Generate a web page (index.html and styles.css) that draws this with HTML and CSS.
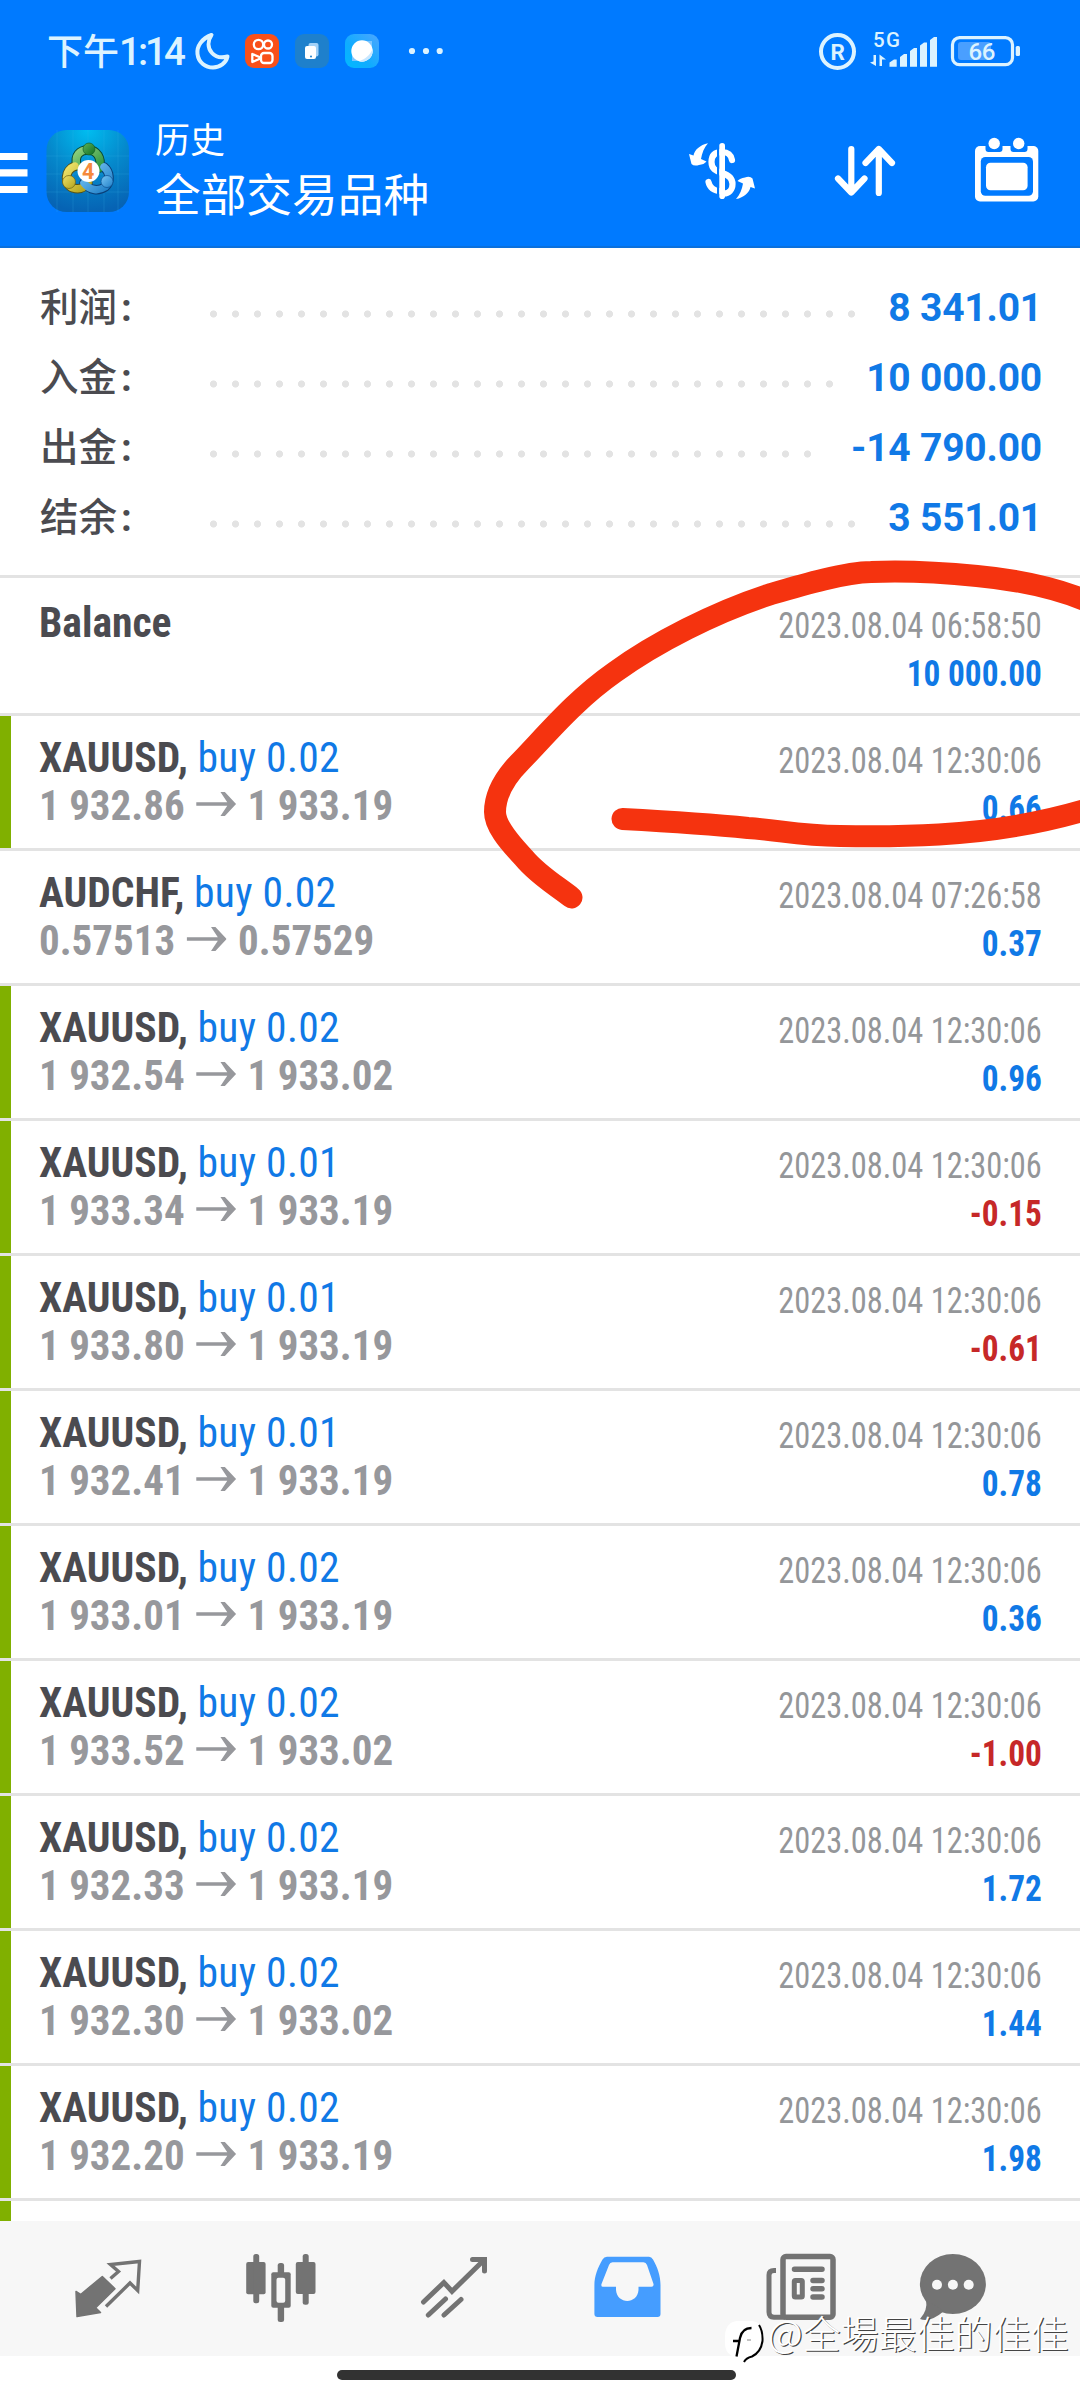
FILE: index.html
```html
<!DOCTYPE html>
<html lang="zh-CN">
<head>
<meta charset="utf-8">
<title>历史</title>
<link rel="stylesheet" href="styles.css">
</head>
<body>
<div class="screen">
  <header class="top">
    <div class="status">
      <span class="clock"><span class="ampm">下午</span>1:14</span>
      <svg class="moon" viewBox="194 32 38 38" width="38" height="38"><path d="M211.500 35C202 38.500 196.500 46 197.500 54C198.500 62.500 205.500 67.500 213 67.500C220 67.500 226 63 227.500 56.500C222 58 216 57.500 212 53C207.500 48 207.500 41 211.500 35Z" fill="none" stroke="#dcf3ff" stroke-width="4" stroke-linejoin="round"/></svg>
      <svg class="s1" viewBox="245 34 34 34" width="34" height="34"><rect x="245" y="34" width="34" height="34" rx="9" fill="#f9501a"/><g fill="none" stroke="#fff" stroke-width="2.300"><circle cx="258.500" cy="44.500" r="4.700"/><circle cx="268" cy="44.500" r="4"/><rect x="261" y="53" width="11.500" height="10" rx="3"/><path d="M252.300 54v8l7-3v-2z" stroke-linejoin="round"/></g></svg>
      <svg class="s2" viewBox="295 34 34 34" width="34" height="34"><rect x="295" y="34" width="34" height="34" rx="9" fill="#1e80cc"/><rect x="308.500" y="43" width="10" height="13.500" rx="2" fill="#a3d2f8"/><rect x="305" y="46" width="11" height="13" rx="2" fill="#fff"/><circle cx="311" cy="56.500" r="1" fill="#1e80cc"/></svg>
      <svg class="s3" viewBox="345 34 34 34" width="34" height="34"><defs><linearGradient id="g3" x1="0" y1="1" x2="1" y2="0"><stop offset="0" stop-color="#00baff"/><stop offset=".4" stop-color="#0facff"/><stop offset="1" stop-color="#4ca6ff"/></linearGradient></defs><rect x="345" y="34" width="34" height="34" rx="9" fill="url(#g3)"/><path d="M352 61V53L364 41H372V49L360 61Z" fill="#7cc6ff"/><circle cx="362" cy="51" r="10.700" fill="#fff"/><path d="M372.500 49A10.700 10.700 0 0 1 359 61.200C365.500 59 370 55 372.500 49Z" fill="#c8e7ff"/></svg>
      <svg class="more" viewBox="407 46 38 10" width="38" height="10"><g fill="#dcf3ff"><circle cx="412" cy="51" r="3.100"/><circle cx="426" cy="51" r="3.100"/><circle cx="439.700" cy="51" r="3.100"/></g></svg>
      <svg class="sys" viewBox="816 28 208 46" width="208" height="46">
        <g fill="#dcf3ff">
        <circle cx="837.500" cy="51.500" r="16.500" fill="none" stroke="#dcf3ff" stroke-width="4"/>
        <text x="830.500" y="60" font-size="22.500" font-weight="700">R</text>
        <text x="873" y="47" font-size="20.500" font-weight="500" textLength="27">5G</text>
        <path d="M870 62.500L876 66V55H873.500V61.500ZM879.500 66V54.500L886 59.500H882V66Z"/>
        <path d="M889.500 66.700V62.500L894 59.500H896.700V66.700ZM900 66.700V57L904 54H907V66.700ZM910 66.700V51L914 48H917V66.700ZM920 66.700V45.500L924 42.500H927V66.700ZM930 66.700V40L934 37H937V66.700Z"/>
        <rect x="952.500" y="37.700" width="60" height="27" rx="7" fill="none" stroke="#dcf3ff" stroke-width="3.200"/>
        <rect x="958" y="42" width="33" height="18" rx="3" fill="#4a9fff"/>
        <rect x="1015.700" y="46" width="4.300" height="10" rx="1.500"/>
        <text x="968.500" y="60" font-size="24" font-weight="500" textLength="27">66</text>
        </g>
      </svg>
    </div>
    <div class="bar">
      <svg class="menu" viewBox="0 150 28 46" width="28" height="46"><path d="M0 153h27.500v7H0zM0 169.200h27.500v7.400H0zM0 186h27.500v7H0z" fill="#fff"/></svg>
      <svg class="app" viewBox="46 130 83 82" width="83" height="82">
        <defs>
          <radialGradient id="bg" cx=".5" cy="0" r="1"><stop offset="0" stop-color="#00bdf0"/><stop offset=".5" stop-color="#0589cc"/><stop offset="1" stop-color="#0663b4"/></radialGradient>
          <linearGradient id="gg" x1="0" y1="0" x2="1" y2="1"><stop offset="0" stop-color="#8fd07c"/><stop offset="1" stop-color="#2b9440"/></linearGradient>
          <linearGradient id="gk" x1="0" y1="0" x2="1" y2="1"><stop offset="0" stop-color="#5fb35a"/><stop offset="1" stop-color="#0e6e22"/></linearGradient>
          <linearGradient id="gy" x1="0" y1="0" x2="1" y2="1"><stop offset="0" stop-color="#ede36a"/><stop offset="1" stop-color="#b3a21a"/></linearGradient>
          <linearGradient id="gb" x1="0" y1="0" x2="1" y2="1"><stop offset="0" stop-color="#79c6f5"/><stop offset="1" stop-color="#1f7fc8"/></linearGradient>
        </defs>
        <rect x="46.500" y="130" width="82.500" height="82" rx="20" fill="url(#bg)"/>
        <path d="M46 156H129M46 174H129M46 192H129M57 130V212M73 130V212M88 130V212M104 130V212M118 130V212" stroke="#3fb6e6" stroke-opacity=".2" stroke-width="1"/>
        <g fill="none" stroke-linecap="round">
          <path d="M77 166C74 155 80 150 88 150C97 150 102 158 99.500 168" stroke="#0b4a32" stroke-width="9.500"/>
          <path d="M75 166C64 170 64 185 73 188C80 190 85 187 88 183" stroke="#54521a" stroke-width="9.500"/>
          <path d="M84 183C90 191 99 191 105 187C111 182 110 172 104 167" stroke="#093f78" stroke-width="9.500"/>
          <path d="M77 166C74 155 80 150 88 150C97 150 102 158 99.500 168" stroke="url(#gg)" stroke-width="7.500"/>
          <path d="M75 166C64 170 64 185 73 188C80 190 85 187 88 183" stroke="url(#gy)" stroke-width="7.500"/>
          <path d="M84 183C90 191 99 191 105 187C111 182 110 172 104 167" stroke="url(#gb)" stroke-width="7.500"/>
        </g>
        <circle cx="89" cy="149" r="6" fill="url(#gk)" stroke="#12602a" stroke-width=".7"/>
        <circle cx="69" cy="182" r="6.500" fill="url(#gy)" stroke="#6c6212" stroke-width=".7"/>
        <circle cx="107" cy="181.500" r="6" fill="url(#gb)" stroke="#0c4f92" stroke-width=".7"/>
        <circle cx="88.500" cy="171" r="11" fill="#fff"/>
        <text x="82" y="178.500" font-size="21.500" font-weight="700" fill="#f58a3c">4</text>
      </svg>
      <div class="titles"><div class="t1">历史</div><div class="t2">全部交易品种</div></div>
      <svg class="acts" viewBox="680 136 368 72" width="368" height="72">
        <g fill="none" stroke="#fff" stroke-width="6.200" stroke-linecap="round" stroke-linejoin="round">
          <path d="M732 160C731 154 727 152 722 152C714.500 152 711.500 156 711.500 162C711.500 169 716 171 722 173C729 175 732.500 178.500 732.500 184C732.500 190 728.500 193.500 724 193.500" />
          <path d="M722 191C713.500 191.500 709.500 187 708.500 182" />
          <path d="M851.300 149V192M838 178.500L851.300 192.500L864.500 178.500M878.800 193V149M865.500 163L878.800 149L892 163"/>
        </g>
        <path d="M717 143H719.300V199H717z" fill="#007aff"/>
        <rect x="719.300" y="143" width="5.700" height="56" rx="2.800" fill="#fff"/>
        <g fill="#fff">
          <path id="swap" d="M708 143.300C700 145 694.500 150 693.500 155.500L689 154L691.500 164Q694 166.500 699 165Q704 164.500 706.500 161.500L701 159C702 153 704 148 708 143.300Z"/>
          <use href="#swap" transform="rotate(180 722 171.200)"/>
          <rect x="975" y="146" width="63.300" height="55.500" rx="5"/>
        </g>
        <path d="M985.500 145H1002.500V149Q1002.500 152 999.500 152H988.500Q985.500 152 985.500 149ZM1010.500 145H1027.500V149Q1027.500 152 1024.500 152H1013.500Q1010.500 152 1010.500 149Z" fill="#007aff"/>
        <rect x="980.800" y="157" width="52.200" height="38.700" rx="4.500" fill="#007aff"/>
        <rect x="986" y="162.700" width="41.600" height="27.600" rx="4.500" fill="#fff"/>
        <circle cx="994.200" cy="143.500" r="5.700" fill="#fff"/><circle cx="1018.700" cy="143.500" r="5.700" fill="#fff"/>
      </svg>
    </div>
  </header>

  <section class="summary">
    <div class="sum"><span class="lbl">利润<i>:</i></span><span class="dots" style="width:660px"></span><b>8 341.01</b></div>
    <div class="sum"><span class="lbl">入金<i>:</i></span><span class="dots" style="width:638px"></span><b>10 000.00</b></div>
    <div class="sum"><span class="lbl">出金<i>:</i></span><span class="dots" style="width:616px"></span><b>-14 790.00</b></div>
    <div class="sum"><span class="lbl">结余<i>:</i></span><span class="dots" style="width:660px"></span><b>3 551.01</b></div>
  </section>

  <main class="list">
    <div class="row first"><div class="l"><div class="sym">Balance</div></div><div class="r"><div class="date">2023.08.04 06:58:50</div><div class="amt">10 000.00</div></div></div>
    <div class="row g"><div class="l"><div class="sym">XAUUSD, <em>buy 0.02</em></div><div class="px">1 932.86<u></u>1 933.19</div></div><div class="r"><div class="date">2023.08.04 12:30:06</div><div class="amt">0.66</div></div></div>
    <div class="row"><div class="l"><div class="sym">AUDCHF, <em>buy 0.02</em></div><div class="px">0.57513<u></u>0.57529</div></div><div class="r"><div class="date">2023.08.04 07:26:58</div><div class="amt">0.37</div></div></div>
    <div class="row g"><div class="l"><div class="sym">XAUUSD, <em>buy 0.02</em></div><div class="px">1 932.54<u></u>1 933.02</div></div><div class="r"><div class="date">2023.08.04 12:30:06</div><div class="amt">0.96</div></div></div>
    <div class="row g"><div class="l"><div class="sym">XAUUSD, <em>buy 0.01</em></div><div class="px">1 933.34<u></u>1 933.19</div></div><div class="r"><div class="date">2023.08.04 12:30:06</div><div class="amt neg">-0.15</div></div></div>
    <div class="row g"><div class="l"><div class="sym">XAUUSD, <em>buy 0.01</em></div><div class="px">1 933.80<u></u>1 933.19</div></div><div class="r"><div class="date">2023.08.04 12:30:06</div><div class="amt neg">-0.61</div></div></div>
    <div class="row g"><div class="l"><div class="sym">XAUUSD, <em>buy 0.01</em></div><div class="px">1 932.41<u></u>1 933.19</div></div><div class="r"><div class="date">2023.08.04 12:30:06</div><div class="amt">0.78</div></div></div>
    <div class="row g"><div class="l"><div class="sym">XAUUSD, <em>buy 0.02</em></div><div class="px">1 933.01<u></u>1 933.19</div></div><div class="r"><div class="date">2023.08.04 12:30:06</div><div class="amt">0.36</div></div></div>
    <div class="row g"><div class="l"><div class="sym">XAUUSD, <em>buy 0.02</em></div><div class="px">1 933.52<u></u>1 933.02</div></div><div class="r"><div class="date">2023.08.04 12:30:06</div><div class="amt neg">-1.00</div></div></div>
    <div class="row g"><div class="l"><div class="sym">XAUUSD, <em>buy 0.02</em></div><div class="px">1 932.33<u></u>1 933.19</div></div><div class="r"><div class="date">2023.08.04 12:30:06</div><div class="amt">1.72</div></div></div>
    <div class="row g"><div class="l"><div class="sym">XAUUSD, <em>buy 0.02</em></div><div class="px">1 932.30<u></u>1 933.02</div></div><div class="r"><div class="date">2023.08.04 12:30:06</div><div class="amt">1.44</div></div></div>
    <div class="row g"><div class="l"><div class="sym">XAUUSD, <em>buy 0.02</em></div><div class="px">1 932.20<u></u>1 933.19</div></div><div class="r"><div class="date">2023.08.04 12:30:06</div><div class="amt">1.98</div></div></div>
    <div class="row g tail"></div>
  </main>

  <nav class="tabs">
    <svg viewBox="70 2250 76 76" width="76" height="76"><path d="M76 2291.500L80.600 2294.500L102.300 2276.500L115 2288.700L95.700 2307.700L100.500 2312.500L77 2316.500Z" fill="#737373" stroke="#737373" stroke-width="1.500" stroke-linejoin="round"/><path d="M110.500 2278.500L118.500 2271.500L110.500 2264.500L139.500 2261.500L137.700 2290.500L130 2283L106 2306.500" fill="none" stroke="#737373" stroke-width="3.400"/></svg>
    <svg viewBox="243 2250 76 76" width="76" height="76"><g fill="#737373"><rect x="246.200" y="2262" width="19.400" height="32.300" rx="2"/><rect x="253.300" y="2254" width="5.900" height="49.300" rx="2.500"/><rect x="295.800" y="2262" width="19.700" height="32" rx="2"/><rect x="302.700" y="2254" width="6" height="50.700" rx="2.500"/><rect x="277.700" y="2263" width="6.400" height="59" rx="2.500"/><rect x="271.300" y="2272.300" width="19.400" height="35.400" rx="2"/></g><rect x="276.500" y="2277.700" width="8.700" height="25" rx="2" fill="#f7f7f7"/></svg>
    <svg viewBox="416 2250 76 76" width="76" height="76"><path d="M423.500 2302L443.900 2282.500L452 2291.300L483.500 2260.500M472.500 2259.500H484.500V2271M445.500 2299L428.300 2315M461 2299.500L444 2315" fill="none" stroke="#737373" stroke-width="5" stroke-linecap="round"/></svg>
    <svg viewBox="589 2250 76 76" width="76" height="76"><path fill="#459dff" fill-rule="evenodd" d="M607 2256.700H649Q651.500 2257 653 2259.500C657.500 2267 660.500 2276 660.500 2285V2314Q660.500 2317 657.500 2317H597.500Q594.400 2317 594.400 2314V2285C594.400 2276 598 2267 602.500 2259.500Q604 2257 607 2256.700ZM612.500 2262.300Q610 2262.300 609 2265L601.500 2284Q600.800 2286.700 603 2286.700H616V2290C617 2304.500 637.500 2304.500 638.500 2290V2286.700H651.500Q654 2286.700 653.500 2284L647 2265Q646 2262.300 643.500 2262.300Z"/></svg>
    <svg viewBox="762 2250 76 76" width="76" height="76"><g fill="none" stroke="#737373"><rect x="783" y="2256.500" width="50" height="60.700" rx="3" stroke-width="5.500"/><path d="M776 2270.500H774Q769 2270.500 769 2275V2312Q769 2317 774 2317.300H785" stroke-width="5"/><path d="M794.500 2269.300H822M813 2280.500H822M813 2288.700H822M813 2297H822" stroke-width="5.500" stroke-linecap="round"/><rect x="794.300" y="2280.500" width="8" height="16.500" rx="1" stroke-width="5"/></g></svg>
    <svg class="chat" viewBox="916 2250 76 76" width="76" height="76"><ellipse cx="952.900" cy="2284" rx="33" ry="30" fill="#737373"/><path d="M926 2300Q928 2310 920 2319Q930 2323 944 2311Z" fill="#737373"/><g fill="#f7f7f7"><circle cx="937" cy="2284.800" r="5"/><circle cx="952.900" cy="2284.800" r="5"/><circle cx="968.700" cy="2284.800" r="5"/></g></svg>
  </nav>
  <footer class="gesture"><span></span></footer>

  <svg class="pen" viewBox="0 540 1080 400" width="1080" height="400"><path d="M571.500 897.500C557 886 538 875 524 858C507 840 495 825 495 812C495 794 505 777 521 761C548 733 575 700 615 672C655 643 715 612 771 594C805 584 845 572.500 871 572C905 570.500 947 573 977 576C1020 580 1062 590 1092 603L1092 808C1050 821 1000 831 939 834.500C905 836.500 868 836.500 840 836C800 835.500 778 830 748 828C705 823.500 660 821 622.500 819" fill="none" stroke="#f5330f" stroke-width="22" stroke-linecap="round" stroke-linejoin="round"/></svg>
  <div class="mark">
    <svg viewBox="724 2318 42 46" width="42" height="46"><path d="M737 2321H752Q763 2322 763 2335V2340Q763 2352 751 2357L744 2362.500L744 2357H736Q725 2355 725 2343V2335Q726 2322 737 2321Z" fill="#fff"/><path d="M759 2325Q763 2331 762.500 2341Q761 2352 752 2356.500Q746 2358 744 2362" fill="none" stroke="#000" stroke-width="2"/><path d="M736.500 2356.500L740 2338Q742 2328 751.500 2328M733 2341H740" fill="none" stroke="#000" stroke-width="2.300"/><path d="M747 2340H751" stroke="#888" stroke-width="1"/></svg>
    <span>@全場最佳的佳佳</span>
  </div>
</div>
</body>
</html>
```
FILE: styles.css
```css
* { box-sizing: border-box; }
body { margin: 0; background: #fff; font-family: Roboto, "Noto Sans CJK SC", sans-serif; }
svg { display: block; flex: none; }
.screen { position: relative; width: 1080px; height: 2400px; overflow: hidden; display: flex; flex-direction: column; background: #fff; }

.top { height: 248px; background: #007aff; border-bottom: 2px solid #0b70dc; flex: none; }
.status { height: 102px; display: flex; align-items: center; padding-left: 47px; }
.clock { width: 147px; padding-top: 2px; color: #dcf3ff; font-size: 38.500px; line-height: 48px; font-weight: 500; letter-spacing: -3px; white-space: nowrap; }
.ampm { font-size: 36px; letter-spacing: 0; }
.s1 { margin-left: 13px; }
.s2, .s3 { margin-left: 16px; }
.more { margin-left: 28px; }
.sys { margin-left: 371px; }
.bar { height: 144px; display: flex; align-items: flex-start; }
.menu { margin-top: 48px; }
.app { margin: 28px 0 0 18px; }
.titles { width: 300px; margin: 16px 0 0 26px; color: #fff; white-space: nowrap; }
.t1 { font-size: 35px; line-height: 48px; }
.t2 { font-size: 45.700px; line-height: 61px; }
.acts { margin: 34px 0 0 225px; }

.summary { flex: none; height: 330px; padding: 24px 38px 0 40px; border-bottom: 3px solid #e3e3e3; color: #4b4b50; }
.sum { height: 70px; display: flex; align-items: center; white-space: nowrap; }
.lbl { width: 162px; font-size: 38.500px; font-weight: 500; padding-bottom: 7px; }
.lbl i { font-style: normal; font-weight: 700; margin-left: 4px; }
.dots { height: 8px; margin: 13px auto 0 0; background: radial-gradient(circle at 11.500px 4px, #e3e3e3 3.200px, transparent 3.900px) 0 0 / 22px 8px repeat-x; }
.sum b { font-size: 39px; font-weight: 700; color: #1079e6; padding-top: 1px; letter-spacing: -.2px; }

.list { flex: none; height: 1643px; overflow: hidden; font-stretch: 75%; font-family: "Roboto Condensed", Roboto, sans-serif; }
.row { height: 135px; display: flex; justify-content: space-between; border-bottom: 3px solid #e3e3e3; padding: 17px 38px 0 39px; white-space: nowrap; }
.row.first { height: 138px; padding-top: 20px; }
.row.g { background: linear-gradient(#80b000, #80b000) 0 0 / 11px 100% no-repeat padding-box; }
.sym { font-size: 43px; line-height: 48px; font-weight: 700; color: #4b4b50; transform: scaleX(.967); transform-origin: 0 0; }
.sym em { font-style: normal; font-weight: 400; color: #1079e6; letter-spacing: .3px; }
.px { font-size: 43px; line-height: 48px; font-weight: 700; color: #97989c; transform: scaleX(.953); transform-origin: 0 0; }
.px u { display: inline-block; width: 42px; height: 24px; margin: 0 12px; text-decoration: none; vertical-align: 4px; background: #97989c; clip-path: polygon(0 43%, 78% 43%, 61% 0, 72% 0, 100% 50%, 72% 100%, 61% 100%, 78% 57%, 0 57%); }
.r { text-align: right; padding-top: 4px; }
.date, .amt { font-size: 36px; line-height: 48px; transform-origin: 100% 0; }
.date { color: #949699; transform: scaleX(.9); }
.amt { font-weight: 700; color: #1079e6; transform: scaleX(.925); }
.amt.neg { color: #c62828; }

.tabs { flex: none; height: 135px; background: #f7f7f7; display: flex; align-items: flex-start; padding: 29px 0 0 70px; gap: 97px; }
.chat { margin-left: -19px; }
.gesture { height: 44px; padding-top: 14px; display: flex; justify-content: center; align-items: flex-start; }
.gesture span { width: 399px; height: 10px; border-radius: 5px; background: #323232; margin-right: 7px; }
.pen { position: absolute; left: 0; top: 540px; }
.mark { position: absolute; left: 724px; top: 2318px; display: flex; align-items: flex-start; white-space: nowrap; }
.mark span { margin: -9px 0 0 2px; font: 300 38px/46px "Noto Sans CJK TC", sans-serif; color: #fff; text-shadow: 1.200px 1.200px 0.300px #444; }
```
